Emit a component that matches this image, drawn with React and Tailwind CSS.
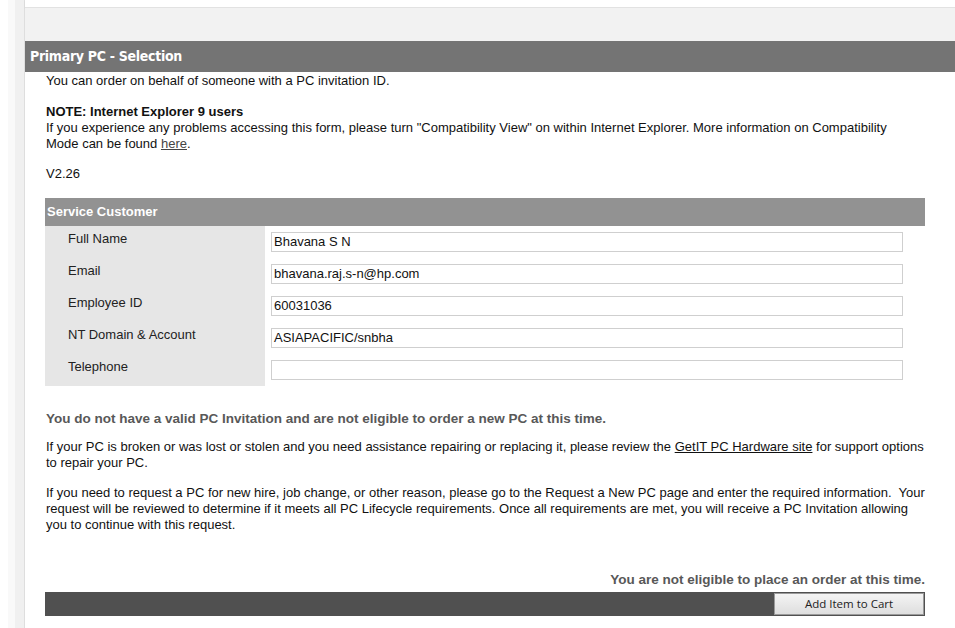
import React from "react";

const arial = { fontFamily: '"Liberation Sans", Arial, sans-serif' };

const fields = [
  { label: "Full Name", value: "Bhavana S N" },
  { label: "Email", value: "bhavana.raj.s-n@hp.com" },
  { label: "Employee ID", value: "60031036" },
  { label: "NT Domain & Account", value: "ASIAPACIFIC/snbha" },
  { label: "Telephone", value: "" },
];

export default function App() {
  return (
    <div className="flex w-[955px] h-[628px] overflow-hidden bg-white" style={arial}>
      {/* left gutter */}
      <div className="w-[8px] shrink-0 bg-white" />
      <div className="w-[7px] shrink-0 bg-[#f9f9f9]" />
      <div className="w-[10px] shrink-0 bg-[#f0f0f0] border-r border-[#dedede]" />

      <div className="flex-1 flex flex-col min-w-0">
        {/* top panel remainder */}
        <div className="h-[8px] bg-white border-b border-[#e2e2e2] shadow-[0_1px_2px_rgba(0,0,0,0.05)]" />
        <div className="h-[33px] bg-[#f2f2f2]" />

        {/* section header */}
        <div className="h-[31px] bg-[#747474] flex items-center px-[5px]">
          <span
            className="text-white font-bold text-[14px] tracking-[-0.3px]"
            style={{ fontFamily: '"DejaVu Sans Condensed", "DejaVu Sans", sans-serif', fontStretch: "condensed" }}
          >
            Primary PC - Selection
          </span>
        </div>

        <div className="flex-1 bg-white pl-[20px] pt-px text-[13px] leading-[16px] text-[#111]">
          <p className="pl-px">You can order on behalf of someone with a PC invitation ID.</p>

          <p className="pl-px mt-[15px] font-bold">NOTE: Internet Explorer 9 users</p>
          <p className="pl-px w-[860px]">
            If you experience any problems accessing this form, please turn "Compatibility View" on within Internet
            Explorer. More information on Compatibility Mode can be found{" "}
            <span className="underline text-[#444]">here</span>.
          </p>

          <p className="pl-px mt-[14px]">V2.26</p>

          {/* Service Customer */}
          <div className="w-[880px] mt-[16px]">
            <div className="h-[28px] bg-[#929292] flex items-center px-[2px]">
              <span className="text-white font-bold text-[13px]">Service Customer</span>
            </div>
            <div className="flex">
              <div className="w-[220px] bg-[#e6e6e6] flex flex-col">
                {fields.map((f) => (
                  <div key={f.label} className="h-[32px] pl-[23px] pt-[5px] text-[#222]">
                    {f.label}
                  </div>
                ))}
              </div>
              <div className="flex-1 flex flex-col">
                {fields.map((f) => (
                  <div key={f.label} className="h-[32px] pl-[6px] pt-[6px]">
                    <div className="w-[632px] h-[20px] border border-[#cfcfcf] bg-white flex items-center px-[2px] text-[#111]">
                      {f.value}
                    </div>
                  </div>
                ))}
              </div>
            </div>
          </div>

          <p className="pl-px mt-[25px] font-bold text-[13.5px] text-[#585858]">
            You do not have a valid PC Invitation and are not eligible to order a new PC at this time.
          </p>

          <p className="pl-px mt-[12px] w-[880px]">
            If your PC is broken or was lost or stolen and you need assistance repairing or replacing it, please review
            the <span className="underline">GetIT PC Hardware site</span> for support options to repair your PC.
          </p>

          <p className="pl-px mt-[14px] w-[880px]">
            If you need to request a PC for new hire, job change, or other reason, please go to the Request a New PC page
            and enter the required information.&nbsp; Your request will be reviewed to determine if it meets all PC
            Lifecycle requirements. Once all requirements are met, you will receive a PC Invitation allowing you to
            continue with this request.
          </p>

          <p className="w-[880px] mt-[39px] text-right font-bold text-[13.5px] text-[#585858]">
            You are not eligible to place an order at this time.
          </p>

          <div className="w-[880px] h-[24px] mt-[4px] bg-[#505050] flex items-center justify-end pr-px">
            <button
              className="w-[150px] h-[22px] border border-[#9a9a9a] bg-gradient-to-b from-[#f4f4f4] to-[#dedede] text-[11.5px] text-[#222] leading-none"
              style={{ fontFamily: '"Open Sans", "Noto Sans", sans-serif' }}
            >
              Add Item to Cart
            </button>
          </div>
        </div>
      </div>
    </div>
  );
}
